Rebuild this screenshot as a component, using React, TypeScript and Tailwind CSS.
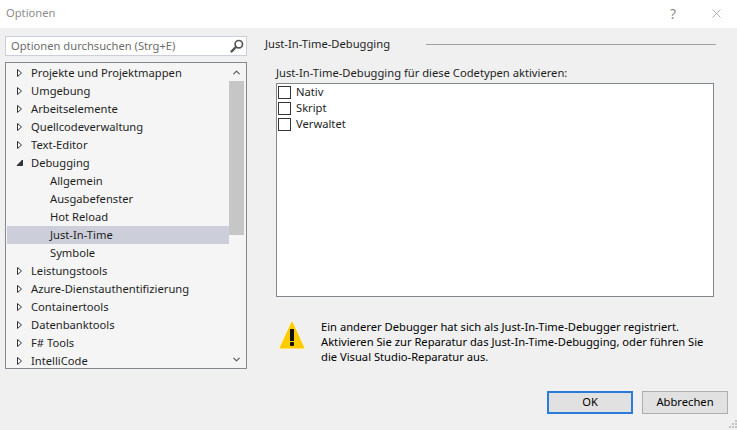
import { useState } from "react";
import { ChevronDown, ChevronUp, X } from "lucide-react";

const TREE = [
  { name: "Projekte und Projektmappen", type: "closed" },
  { name: "Umgebung", type: "closed" },
  { name: "Arbeitselemente", type: "closed" },
  { name: "Quellcodeverwaltung", type: "closed" },
  { name: "Text-Editor", type: "closed" },
  { name: "Debugging", type: "open" },
  { name: "Allgemein", type: "child" },
  { name: "Ausgabefenster", type: "child" },
  { name: "Hot Reload", type: "child" },
  { name: "Just-In-Time", type: "child" },
  { name: "Symbole", type: "child" },
  { name: "Leistungstools", type: "closed" },
  { name: "Azure-Dienstauthentifizierung", type: "closed" },
  { name: "Containertools", type: "closed" },
  { name: "Datenbanktools", type: "closed" },
  { name: "F# Tools", type: "closed" },
  { name: "IntelliCode", type: "closed" },
];

const CODE_TYPES = ["Nativ", "Skript", "Verwaltet"];

function Arrow({ open }: { open: boolean }) {
  return (
    <svg viewBox="0 0 8 10" className="h-[10px] w-2 shrink-0">
      {open ? (
        <path d="M1 7.5 6.5 2v5.5z" fill="#333" stroke="#333" />
      ) : (
        <path d="M1.5 1.5v7L5.5 5z" fill="#fff" stroke="#333" />
      )}
    </svg>
  );
}

function SearchIcon() {
  return (
    <svg viewBox="0 0 14 14" className="h-[14px] w-[14px] shrink-0">
      <circle cx="8.8" cy="5.2" r="3.7" fill="none" stroke="#555" strokeWidth="1.7" />
      <path d="M6 8 1.6 12.4" stroke="#555" strokeWidth="2.4" strokeLinecap="round" />
    </svg>
  );
}

function WarningIcon() {
  return (
    <svg viewBox="0 0 28 30" className="h-[30px] w-[28px] shrink-0">
      <path
        d="M14 1.5 26.8 28.5H1.2z"
        fill="#fc0"
        stroke="#fff6d8"
        strokeWidth="1.6"
        strokeLinejoin="round"
      />
      <path d="M14 2 26 28H2z" fill="#fc0" stroke="#fc0" strokeLinejoin="round" />
      <rect x="12" y="9" width="4" height="12" fill="#111" />
      <rect x="12" y="22" width="4" height="4" rx="1" fill="#111" />
    </svg>
  );
}

function ResizeGrip() {
  return (
    <svg viewBox="0 0 8 8" className="absolute bottom-[2px] right-0 h-2 w-2" fill="#c4c4c4">
      <rect x="6" y="0" width="2" height="2" />
      <rect x="3" y="3" width="2" height="2" />
      <rect x="6" y="3" width="2" height="2" />
      <rect x="0" y="6" width="2" height="2" />
      <rect x="3" y="6" width="2" height="2" />
      <rect x="6" y="6" width="2" height="2" />
    </svg>
  );
}

export default function App() {
  const [selected, setSelected] = useState("Just-In-Time");

  return (
    <div className="flex h-[430px] w-[737px] flex-col overflow-hidden bg-[#f0f0f0] font-['Noto_Sans',sans-serif] text-[11.2px] text-[#1e1e1e]">
      <div className="flex h-[28px] shrink-0 items-center justify-between bg-white pb-[2px] pl-[6px] pr-[13px]">
        <span className="text-[#8e8e8e]">Optionen</span>
        <div className="flex items-center gap-[33px] text-[#8e8e8e]">
          <span className="text-[14px]">?</span>
          <X size={15} strokeWidth={1.1} />
        </div>
      </div>

      <div className="flex min-h-0 flex-1 pl-[5px] pr-[23px] pt-2">
        <div className="flex w-[242px] shrink-0 flex-col gap-[6px]">
          <div className="flex h-5 items-center justify-between border border-[#cccedb] bg-white pl-[5px] pr-[2px] text-[#6d6d6d]">
            <span>Optionen durchsuchen (Strg+E)</span>
            <SearchIcon />
          </div>
          <div className="flex h-[307px] border border-[#828790] bg-[#f5f5f5] pl-[1px] pt-[1px]">
            <div className="min-w-0 flex-1">
              {TREE.map((row) => (
                <div
                  key={row.name}
                  onClick={() => setSelected(row.name)}
                  className={`flex h-[18px] items-center whitespace-nowrap ${
                    row.name === selected ? "bg-[#ccceda]" : ""
                  } ${row.type === "child" ? "pl-[43px]" : "pl-[9px]"}`}
                >
                  {row.type !== "child" && <Arrow open={row.type === "open"} />}
                  <span className={row.type === "child" ? "" : "ml-[7px]"}>{row.name}</span>
                </div>
              ))}
            </div>
            <div className="flex w-[17px] shrink-0 flex-col text-[#555]">
              <div className="flex h-[17px] w-[15px] items-center justify-center">
                <ChevronUp size={11} strokeWidth={2.5} />
              </div>
              <div className="h-[154px] w-[15px] bg-[#c6c6c6]" />
              <div className="flex-1" />
              <div className="flex h-[17px] w-[15px] items-center justify-center">
                <ChevronDown size={11} strokeWidth={2.5} />
              </div>
            </div>
          </div>
        </div>

        <div className="ml-[18px] flex min-w-0 flex-1 flex-col">
          <div className="-mr-[2px] flex h-4 items-center">
            <span className="whitespace-nowrap">Just-In-Time-Debugging</span>
            <div className="ml-auto h-px w-[290px] bg-[#a0a0a0]" />
          </div>
          <div className="ml-[11px] mt-[13px] flex h-[17px] items-center whitespace-nowrap">
            Just-In-Time-Debugging für diese Codetypen aktivieren:
          </div>
          <div className="ml-[11px] mt-[1px] h-[214px] border border-[#828790] bg-white pl-[1px]">
            {CODE_TYPES.map((name) => (
              <label key={name} className="flex h-4 items-center">
                <span className="h-[13px] w-[13px] border border-[#333] bg-white" />
                <span className="ml-[5px]">{name}</span>
              </label>
            ))}
          </div>
          <div className="ml-[13px] mt-[23px] flex items-start">
            <WarningIcon />
            <p className="-mt-[1px] ml-[15px] whitespace-nowrap leading-[15px] text-black">
              Ein anderer Debugger hat sich als Just-In-Time-Debugger registriert.
              <br />
              Aktivieren Sie zur Reparatur das Just-In-Time-Debugging, oder führen Sie
              <br />
              die Visual Studio-Reparatur aus.
            </p>
          </div>
        </div>
      </div>

      <div className="relative flex h-[39px] shrink-0 items-start justify-end gap-[9px] pr-[9px]">
        <button
          type="button"
          className="h-[23px] w-[86px] border-2 border-[#2b7bd8] bg-[#e1e1e1] text-black"
        >
          OK
        </button>
        <button
          type="button"
          className="h-[23px] w-[86px] border border-[#adadad] bg-[#e1e1e1] text-black"
        >
          Abbrechen
        </button>
        <ResizeGrip />
      </div>
    </div>
  );
}
